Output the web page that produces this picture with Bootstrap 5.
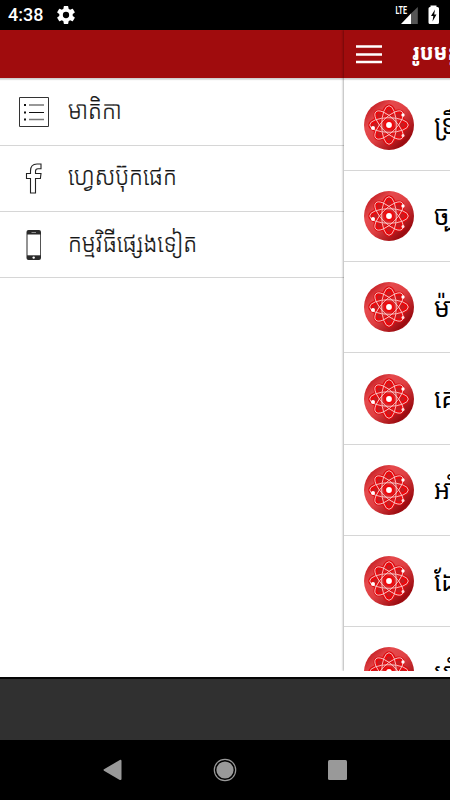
<!DOCTYPE html>
<html lang="km">
<head>
<meta charset="utf-8">
<meta name="viewport" content="width=device-width, initial-scale=1">
<title>មាតិកា</title>
<link href="https://cdn.jsdelivr.net/npm/bootstrap@5.3.0/dist/css/bootstrap.min.css" rel="stylesheet">
<style>
body{font-family:"Noto Sans Khmer","Khmer OS","Noto Sans",sans-serif;color:#161616;line-height:1}
.phone{width:450px;height:800px;background:#fff}
.status-row{height:30px;background:#000;padding:0 10px 0 8px}
.clock{font:500 18px/32px Roboto,sans-serif;width:49px}
.stage{height:641px}
.drawer{width:344px}
.page{width:106px;box-shadow:-1px 0 2px rgba(0,0,0,.3);z-index:1}
.topbar{height:49px;margin-bottom:.5px;background:#a00c0d;border-bottom:1px solid #cfcfcf;box-shadow:0 1px 1px rgba(0,0,0,.12)}
.page .topbar{padding-left:12px}
.app-title{font-size:20px;margin-left:30px;font-weight:800;line-height:44px;height:48px;transform:scaleY(1.12)}
.menu-row{height:66.3px;border-bottom:1px solid #d6d6d6;padding-left:18px}
.menu-row svg{width:32px;height:32px;flex:none}
.menu-label{font-size:22.6px;font-weight:300;margin-left:18px;line-height:61px;height:66px;transform:scaleY(1.1);-webkit-text-stroke:.2px #161616}
.lesson{height:91.3px;border-bottom:1px solid #d6d6d6;padding-left:20px}
.lesson svg{width:50px;height:50px;flex:none}
.lesson-name{font-size:25px;margin-left:20px;line-height:89px;height:91px;color:#000;transform:scaleY(1.08)}
.ad{height:63px;background:#303030;border-top:2px solid #050505}
.keys{height:60px;background:#000}
</style>
<script src="https://cdn.jsdelivr.net/npm/bootstrap@5.3.0/dist/js/bootstrap.bundle.min.js"></script>
</head>
<body>
<svg width="0" height="0" class="position-absolute" aria-hidden="true">
<defs>
<linearGradient id="ball" x1="0" y1="0" x2="1" y2="1"><stop offset=".1" stop-color="#c0181d"/><stop offset=".3" stop-color="#e54a4d"/><stop offset=".5" stop-color="#e04043"/><stop offset=".82" stop-color="#9c0b10"/><stop offset="1" stop-color="#b8262a"/></linearGradient>
<symbol id="atom" viewBox="0 0 50 50">
<circle cx="25" cy="25" r="25" fill="url(#ball)"/>
<g fill="#d8282b" stroke="#e00a0e" stroke-width="3.500"><ellipse cx="25" cy="25" rx="19" ry="7.300"/><ellipse cx="25" cy="25" rx="18" ry="7.300" transform="rotate(45 25 25)"/><ellipse cx="25" cy="25" rx="19" ry="7.300" transform="rotate(90 25 25)"/><ellipse cx="25" cy="25" rx="18" ry="7.300" transform="rotate(135 25 25)"/></g>
<g fill="#c02024" stroke="#f0080c" stroke-width="1.300"><circle cx="25" cy="11.500" r="3"/><circle cx="25" cy="38.500" r="3"/><circle cx="38.500" cy="25" r="3"/><circle cx="11.500" cy="25" r="3"/><circle cx="15.500" cy="15.500" r="3"/><circle cx="34.500" cy="15.500" r="3"/><circle cx="15.500" cy="34.500" r="3"/><circle cx="34.500" cy="34.500" r="3"/></g>
<g fill="none" stroke="#f8cccc" stroke-width=".9"><ellipse cx="25" cy="25" rx="19.300" ry="7.300"/><ellipse cx="25" cy="25" rx="18.600" ry="7.300" transform="rotate(45 25 25)"/><ellipse cx="25" cy="25" rx="19.300" ry="7.300" transform="rotate(90 25 25)"/><ellipse cx="25" cy="25" rx="18.600" ry="7.300" transform="rotate(135 25 25)"/></g>
<circle cx="25" cy="25" r="5" fill="#f0080c"/><circle cx="25" cy="25" r="2.900" fill="#fff"/>
<circle cx="9" cy="28" r="2" fill="#fff"/><circle cx="39" cy="15" r="1.700" fill="#fff"/><circle cx="39" cy="35.500" r="1.500" fill="#fbe0e0"/>
</symbol>
</defs>
</svg>
<div class="phone d-flex flex-column overflow-hidden">
<div class="status-row d-flex align-items-center text-white flex-shrink-0">
<span class="clock">4:38</span>
<svg width="18" height="18" viewBox="2 2 20 20" fill="#fff"><path d="M19.430 12.980a7.800 7.800 0 0 0 0-1.960l2.110-1.650a.5.5 0 0 0 .12-.64l-2-3.460a.5.5 0 0 0-.61-.22l-2.490 1a7.300 7.300 0 0 0-1.690-.98l-.38-2.650A.5.5 0 0 0 14 2h-4a.5.5 0 0 0-.49.42l-.38 2.650c-.61.250-1.170.590-1.690.98l-2.490-1a.5.5 0 0 0-.61.220l-2 3.460a.5.5 0 0 0 .12.640l2.110 1.650a7.900 7.900 0 0 0 0 1.960l-2.110 1.650a.5.5 0 0 0-.12.640l2 3.460c.12.220.39.300.61.220l2.490-1c.52.400 1.080.730 1.690.98l.38 2.650c.03.240.24.420.49.420h4c.25 0 .46-.18.49-.42l.38-2.650c.61-.25 1.170-.59 1.690-.98l2.490 1c.23.090.49 0 .61-.22l2-3.460a.5.5 0 0 0-.12-.64zM12 15.500a3.500 3.500 0 1 1 0-7 3.500 3.500 0 0 1 0 7z"/></svg>
<svg class="ms-auto" width="45" height="26" viewBox="395 2 45 26"><path d="M411 13.500 417.800 7V24H411z" fill="#555"/><path d="M401 24l10-10.500V24z" fill="#fff"/><text x="395.500" y="14" font-family="Roboto,sans-serif" font-size="10" font-weight="700" fill="#fff" textLength="11.500" lengthAdjust="spacingAndGlyphs">LTE</text><path d="M430.500 7v-1.500h6V7h1q1.500 0 1.500 1.500v14q0 1.500-1.500 1.500h-7.500q-1.500 0-1.500-1.500v-14Q428.500 7 430 7z" fill="#fff"/><path d="M435 9.500l-4 6.500h2.300l-.8 5.500 4-7h-2.300z" fill="#000"/></svg>
</div>
<div class="stage d-flex overflow-hidden flex-shrink-0">
<aside class="drawer flex-shrink-0">
<div class="topbar"></div>
<div class="menu-row d-flex align-items-center">
<svg viewBox="18 96 32 32" fill="none" stroke="#333" stroke-width="1"><path d="M19.500 97.500h29v29h-29z"/><path d="M29 105h15M29 119.500h15" stroke="#777" stroke-width="1.300"/><path d="M29 112.500h15" stroke="#111"/><path d="M24 105h2M24 112.500h2M24 119.500h2" stroke="#111" stroke-width="2"/></svg>
<span class="menu-label text-nowrap">មាតិកា</span></div>
<div class="menu-row d-flex align-items-center">
<svg viewBox="18 162 32 32" fill="none" stroke="#222" stroke-width="1.100"><path d="M30.500 193V178.500h-4v-5h4v-2.500q0-7 6.500-7h4v4.700h-3q-2.500 0-2.500 2.500v2.300h5.500l-.6 5h-4.900V193z"/></svg>
<span class="menu-label text-nowrap">ហ្វេសប៊ុកផេក</span></div>
<div class="menu-row d-flex align-items-center">
<svg viewBox="18 229 32 32"><rect x="26.500" y="230" width="14.500" height="30" rx="2" fill="#2a2a2a"/><path d="M27.500 234.500h12.700v20.800H27.500z" fill="#fff"/><path d="M31.500 232.500h4.500" stroke="#aaa" stroke-width=".8"/><circle cx="33.700" cy="257.600" r="1.200" fill="#fff"/></svg>
<span class="menu-label text-nowrap">កម្មវិធីផ្សេងទៀត</span></div>
</aside>
<main class="page flex-shrink-0 overflow-hidden">
<div class="topbar d-flex align-items-center text-white">
<svg class="flex-shrink-0" width="26" height="20" viewBox="0 0 26 20" fill="none" stroke="#fff" stroke-width="2.700"><path d="M0 2.500h26M0 10.500h26M0 18h26"/></svg>
<span class="app-title text-nowrap">រូបមន្ត</span></div>
<div class="lesson d-flex align-items-center"><svg><use href="#atom"/></svg><span class="lesson-name text-nowrap">ទ្រឹស្តី</span></div>
<div class="lesson d-flex align-items-center"><svg><use href="#atom"/></svg><span class="lesson-name text-nowrap">ច្បាប់</span></div>
<div class="lesson d-flex align-items-center"><svg><use href="#atom"/></svg><span class="lesson-name text-nowrap">ម៉ាស</span></div>
<div class="lesson d-flex align-items-center"><svg><use href="#atom"/></svg><span class="lesson-name text-nowrap">គេ</span></div>
<div class="lesson d-flex align-items-center"><svg><use href="#atom"/></svg><span class="lesson-name text-nowrap">អាំង</span></div>
<div class="lesson d-flex align-items-center"><svg><use href="#atom"/></svg><span class="lesson-name text-nowrap">ដែន</span></div>
<div class="lesson d-flex align-items-center"><svg><use href="#atom"/></svg><span class="lesson-name text-nowrap">អាំង</span></div>
</main>
</div>
<div class="ad mt-auto flex-shrink-0"></div>
<div class="keys d-flex align-items-center justify-content-center flex-shrink-0">
<svg width="450" height="60" fill="#999"><path d="M104 29.300q-1 .7 0 1.400l15.800 9.200q1.700.6 1.700-1V21q0-1.600-1.700-1z"/><circle cx="225" cy="30" r="8.600"/><circle cx="225" cy="30" r="10.700" fill="none" stroke="#999" stroke-width="1.200"/><rect x="328" y="20" width="19" height="20" rx="1.500"/></svg>
</div>
</div>
</body>
</html>
